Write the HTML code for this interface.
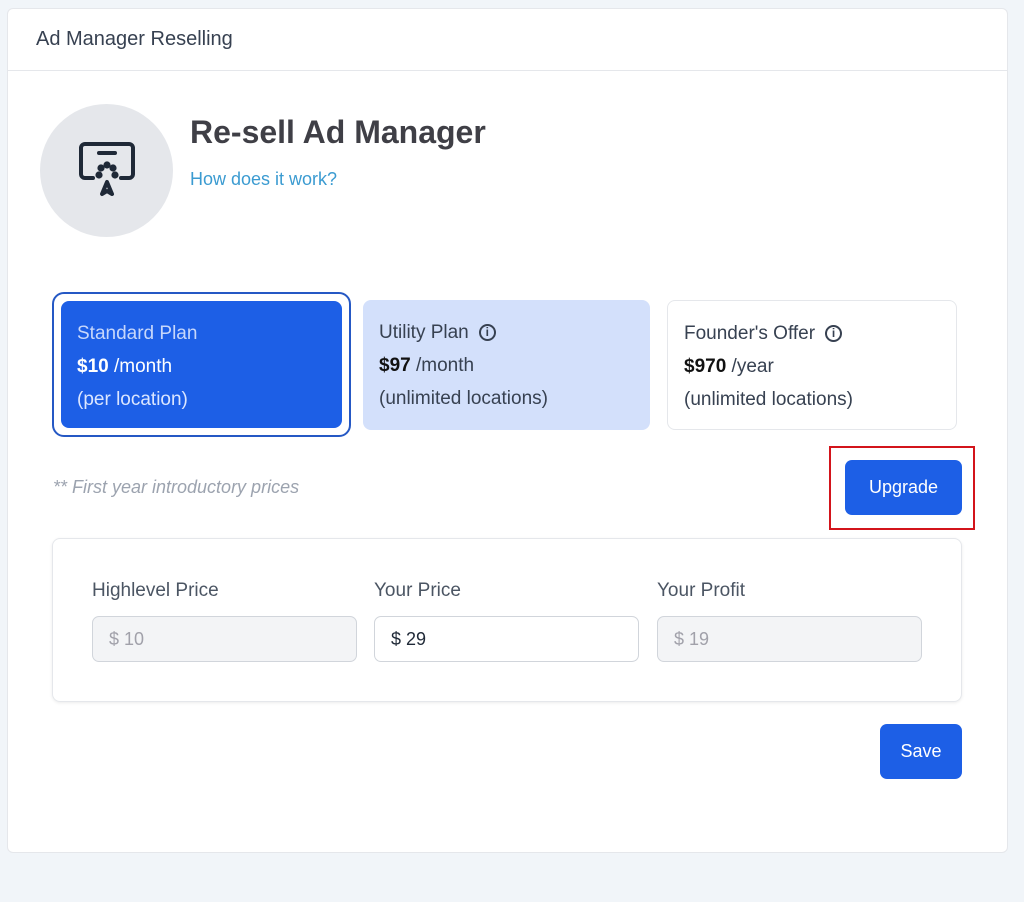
<!DOCTYPE html>
<html><head><style>
body{margin:0;width:1024px;height:902px;background:#f1f5f9;font-family:"Liberation Sans",sans-serif;position:relative;overflow:hidden}
.card{position:absolute;left:7px;top:8px;width:999px;height:843px;background:#fff;border:1px solid #e5e7eb;border-radius:6px}
.hdr{height:61px;border-bottom:1px solid #e5e7eb;font-size:20px;color:#374151;line-height:61px;padding-left:28px}
.abs{position:absolute}
.plan{position:absolute;top:293px;height:136px;border-radius:8px;box-sizing:border-box;padding:26px 16px;font-size:19px;line-height:33px}
.inp{position:absolute;top:616px;width:265px;height:46px;box-sizing:border-box;border:1px solid #d1d5db;border-radius:7px;font-size:18px;line-height:44px;padding-left:16px}
.lbl{position:absolute;top:580px;font-size:19px;color:#4b5563}
.btn{position:absolute;background:#1d5fe6;color:#fff;border-radius:7px;font-size:18px;text-align:center}
.i{display:inline-block;width:17px;height:17px;border:2px solid #374151;border-radius:50%;font-size:12px;text-align:center;font-weight:bold;vertical-align:2px;margin-left:10px;box-sizing:border-box;line-height:13px}
</style></head><body>
<div class="card"><div class="hdr">Ad Manager Reselling</div></div>
<div class="abs" style="left:40px;top:104px;width:133px;height:133px;border-radius:50%;background:#e5e7eb"></div>
<svg class="abs" style="left:77px;top:140px" width="60" height="60" viewBox="0 0 60 60" fill="none" stroke="#1f2937" stroke-width="4" stroke-linecap="round" stroke-linejoin="round">
<path d="M16 38 H8 a4 4 0 0 1 -4 -4 V8 a4 4 0 0 1 4 -4 H52 a4 4 0 0 1 4 4 V34 a4 4 0 0 1 -4 4 H44"/>
<path d="M22 13 H38"/>
<path d="M25 54 L30 42 L35 54 L30 51 Z"/>
<circle cx="30" cy="25" r="1.6" fill="#1f2937"/><circle cx="24" cy="28" r="1.6" fill="#1f2937"/><circle cx="36" cy="28" r="1.6" fill="#1f2937"/><circle cx="22" cy="35" r="1.6" fill="#1f2937"/><circle cx="38" cy="35" r="1.6" fill="#1f2937"/>
</svg>
<div class="abs" style="left:190px;top:114px;font-size:32px;font-weight:bold;color:#3f3f46">Re-sell Ad Manager</div>
<div class="abs" style="left:190px;top:169px;font-size:18px;color:#3b9bd1">How does it work?</div>
<div class="abs" style="left:52px;top:292px;width:299px;height:145px;border:2px solid #2558c4;border-radius:12px;box-sizing:border-box"></div>
<div class="plan" style="left:61px;top:301px;width:281px;height:127px;background:#1d5fe6;color:#dbe6ff;padding-top:16px"><div style="color:#c7d7fb">Standard Plan</div><div style="color:#fff"><b>$10</b> /month</div><div>(per location)</div></div>
<div class="plan" style="left:363px;top:300px;width:287px;height:130px;background:#d3e0fb;color:#374151;padding-top:16px"><div>Utility Plan<span class="i">i</span></div><div><b style="color:#111">$97</b> /month</div><div>(unlimited locations)</div></div>
<div class="plan" style="left:667px;top:300px;width:290px;height:130px;background:#fff;border:1px solid #e5e7eb;color:#374151;padding-top:16px"><div>Founder's Offer<span class="i">i</span></div><div><b style="color:#111">$970</b> /year</div><div>(unlimited locations)</div></div>
<div class="abs" style="left:53px;top:477px;font-size:18px;font-style:italic;color:#9ca3af">** First year introductory prices</div>
<div class="abs" style="left:829px;top:446px;width:146px;height:84px;border:2px solid #d3141b;box-sizing:border-box"></div>
<div class="btn" style="left:845px;top:460px;width:117px;height:55px;line-height:55px">Upgrade</div>
<div class="abs" style="left:52px;top:538px;width:910px;height:164px;border:1px solid #e5e7eb;border-radius:8px;box-sizing:border-box;box-shadow:0 1px 3px rgba(0,0,0,.08)"></div>
<div class="lbl" style="left:92px">Highlevel Price</div>
<div class="lbl" style="left:374px">Your Price</div>
<div class="lbl" style="left:657px">Your Profit</div>
<div class="inp" style="left:92px;background:#f3f4f6;color:#a1a1aa">$ 10</div>
<div class="inp" style="left:374px;background:#fff;color:#1f2937">$ 29</div>
<div class="inp" style="left:657px;background:#f3f4f6;color:#a1a1aa">$ 19</div>
<div class="btn" style="left:880px;top:724px;width:82px;height:55px;line-height:55px">Save</div>
</body></html>
